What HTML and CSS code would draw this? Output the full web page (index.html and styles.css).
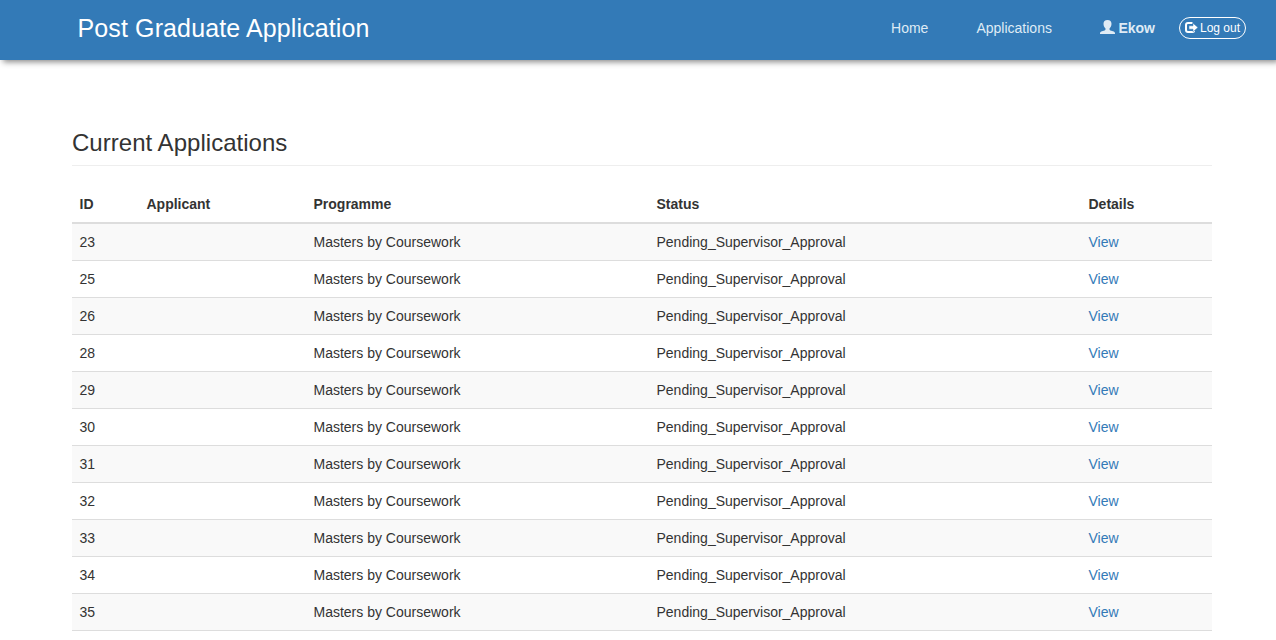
FILE: index.html
```html
<!DOCTYPE html>
<html lang="en">
<head>
<meta charset="utf-8">
<title>Post Graduate Application</title>
<link rel="stylesheet" href="styles.css">
</head>
<body>
<header class="navbar">
  <a class="brand">Post Graduate Application</a>
  <nav class="nav">
    <a class="nav-home">Home</a>
    <a class="nav-apps">Applications</a>
    <a class="user"><svg class="user-icon" viewBox="0 0 15 14"><path d="M7.500 0C4.800 0 3.500 1.500 3.500 3.800c0 2.200.8 3.600 2 4.700v.8c0 .6-.3.900-.9 1.100L1.200 11.500C.4 11.900 0 12.400 0 13.200V14h15v-.8c0-.8-.4-1.300-1.200-1.700l-3.400-1.100c-.6-.2-.9-.5-.9-1.100v-.8c1.200-1.100 2-2.500 2-4.700C11.500 1.500 10.200 0 7.500 0z"/></svg><b>Ekow</b></a>
    <a class="logout"><svg class="logout-icon" viewBox="0 0 13 11"><path class="door" d="M7.500 1H3Q1 1 1 3v5q0 2 2 2h4.500q1.500 0 1.500-1.500"/><path class="arrow" d="M8 1.200 13 5.500 8 9.800V7.200H4V3.800h4z"/></svg><span>Log out</span></a>
  </nav>
</header>
<main class="container">
  <h3 class="page-title">Current Applications</h3>
  <table class="table">
    <colgroup><col class="c-id"><col class="c-applicant"><col class="c-programme"><col class="c-status"><col class="c-details"></colgroup>
    <thead><tr><th>ID</th><th>Applicant</th><th>Programme</th><th>Status</th><th>Details</th></tr></thead>
    <tbody>
      <tr><td>23</td><td></td><td>Masters by Coursework</td><td>Pending_Supervisor_Approval</td><td><a>View</a></td></tr>
      <tr><td>25</td><td></td><td>Masters by Coursework</td><td>Pending_Supervisor_Approval</td><td><a>View</a></td></tr>
      <tr><td>26</td><td></td><td>Masters by Coursework</td><td>Pending_Supervisor_Approval</td><td><a>View</a></td></tr>
      <tr><td>28</td><td></td><td>Masters by Coursework</td><td>Pending_Supervisor_Approval</td><td><a>View</a></td></tr>
      <tr><td>29</td><td></td><td>Masters by Coursework</td><td>Pending_Supervisor_Approval</td><td><a>View</a></td></tr>
      <tr><td>30</td><td></td><td>Masters by Coursework</td><td>Pending_Supervisor_Approval</td><td><a>View</a></td></tr>
      <tr><td>31</td><td></td><td>Masters by Coursework</td><td>Pending_Supervisor_Approval</td><td><a>View</a></td></tr>
      <tr><td>32</td><td></td><td>Masters by Coursework</td><td>Pending_Supervisor_Approval</td><td><a>View</a></td></tr>
      <tr><td>33</td><td></td><td>Masters by Coursework</td><td>Pending_Supervisor_Approval</td><td><a>View</a></td></tr>
      <tr><td>34</td><td></td><td>Masters by Coursework</td><td>Pending_Supervisor_Approval</td><td><a>View</a></td></tr>
      <tr><td>35</td><td></td><td>Masters by Coursework</td><td>Pending_Supervisor_Approval</td><td><a>View</a></td></tr>
    </tbody>
  </table>
</main>
</body>
</html>
```
FILE: styles.css
```css
* { box-sizing: border-box; }
body {
  margin: 0;
  background: #fff;
  color: #333;
  font: 14px/20px "Liberation Sans", Arial, sans-serif;
}
.navbar {
  display: flex;
  align-items: center;
  justify-content: space-between;
  height: 60px;
  padding: 0 30px 4px 77.5px;
  background: #337ab7;
  color: #fff;
  box-shadow: 3px 2px 6px #888;
}
.brand { font-size: 25px; line-height: 30px; letter-spacing: 0.12px; }
.nav { display: flex; align-items: center; color: #dfebf5; }
.nav-apps { margin-left: 48px; }
.user { display: flex; align-items: center; margin-left: 48.5px; }
.user-icon { width: 15px; height: 14px; margin: -2px 3px 0 0; fill: currentColor; }
.logout {
  display: flex;
  align-items: center;
  width: 67px;
  height: 22px;
  margin-left: 24px;
  padding-left: 5px;
  border: 1px solid #fff;
  border-radius: 11px;
  color: #fff;
  font-size: 12px;
  white-space: nowrap;
}
.logout-icon { width: 13px; height: 11px; margin: -1px 2px 0 0; }
.door { fill: none; stroke: #fff; stroke-width: 2; }
.arrow { fill: #fff; stroke: #337ab7; stroke-width: 0.5; }
.container { width: 1140px; margin: 0 0 0 72px; padding-top: 70px; }
.page-title {
  height: 36px;
  margin: 0 0 20px;
  border-bottom: 1px solid #eee;
  font-size: 24px;
  font-weight: 400;
  line-height: 26px;
  letter-spacing: 0.03px;
}
.table { width: 1140px; table-layout: fixed; border-collapse: separate; border-spacing: 0; }
.c-id { width: 67px; }
.c-applicant { width: 167px; }
.c-programme { width: 343px; }
.c-status { width: 432px; }
.c-details { width: 131px; }
.table th { height: 38px; padding: 8px 7.5px; border-bottom: 2px solid #ddd; text-align: left; }
.table td { height: 37px; padding: 8px 7.5px; border-bottom: 1px solid #ddd; }
.table tbody tr:nth-child(odd) { background: #f9f9f9; }
.table a { color: #337ab7; }
```
